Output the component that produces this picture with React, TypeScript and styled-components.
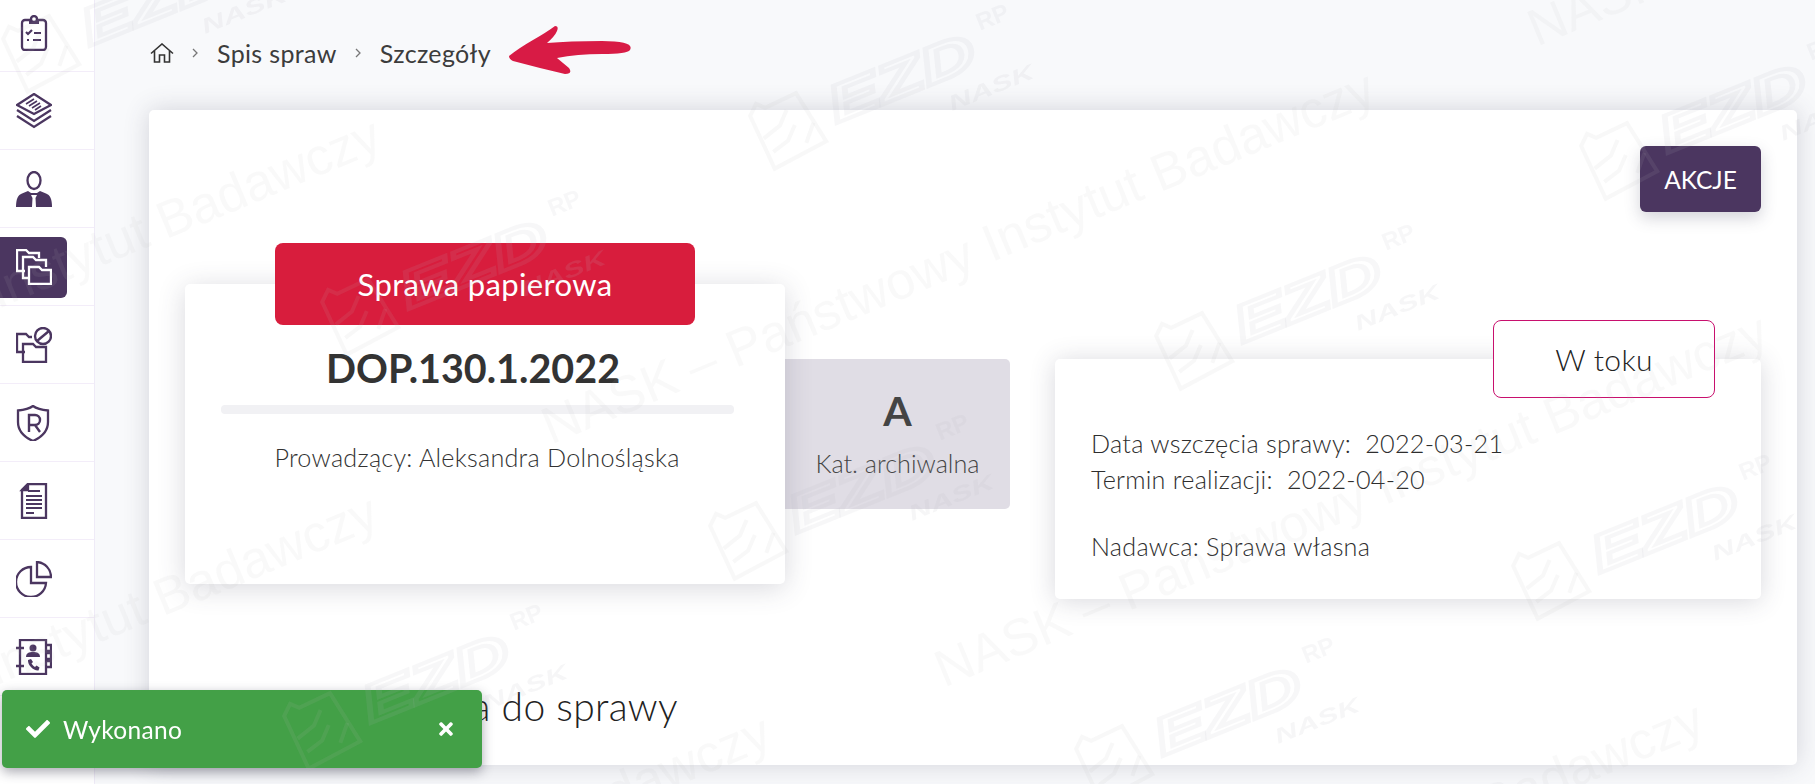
import React from 'react';
import styled, { createGlobalStyle } from 'styled-components';
import { FaCheck, FaTimes } from 'react-icons/fa';

const purple = '#4b3660';

const GlobalStyle = createGlobalStyle`
  html, body {
    margin: 0;
    padding: 0;
    height: 100%;
    overflow: hidden;
    background: #f8f9fb;
    font-family: 'Lato', 'Noto Sans', sans-serif;
    color: #3a3a3a;
  }
`;

const Page = styled.div`
  display: flex;
  width: 1815px;
  height: 784px;
  overflow: hidden;
`;

const Sidebar = styled.nav`
  flex: 0 0 95px;
  height: 784px;
  box-sizing: border-box;
  background: #fff;
  border-right: 1px solid #efebf7;
  display: flex;
  flex-direction: column;
  overflow: hidden;
`;

const NavRow = styled.div<{ $first?: boolean }>`
  flex: 0 0 ${p => (p.$first ? '72px' : '78px')};
  box-sizing: border-box;
  border-bottom: 1px solid #f3edf9;
  display: flex;
  align-items: center;
  padding: ${p => (p.$first ? '0 0 6px' : '1px 0 0')};
`;

const NavItem = styled.div<{ $active?: boolean }>`
  width: 67px;
  height: 61px;
  display: flex;
  align-items: center;
  justify-content: center;
  border-radius: 0 6px 6px 0;
  color: ${p => (p.$active ? '#fff' : purple)};
  background: ${p => (p.$active ? purple : 'transparent')};
`;

const Main = styled.main`
  flex: 1;
  min-width: 0;
  display: flex;
  flex-direction: column;
  padding: 0 18px 0 54px;
`;

const Breadcrumbs = styled.div`
  flex: 0 0 110px;
  box-sizing: border-box;
  display: flex;
  align-items: center;
  padding: 0 0 4px 1px;
  font-size: 25px;
  color: #3c3c3c;
`;

const Crumb = styled.span`
  line-height: 30px;
  letter-spacing: 0.35px;
`;

const Chevron = styled.svg`
  margin: 0 18px;
  flex: none;
`;

const Arrow = styled.svg`
  margin: -4px 0 0 18px;
  flex: none;
`;

const Card = styled.section`
  height: 655px;
  box-sizing: border-box;
  padding: 36px 36px 0;
  background: #fff;
  border-radius: 5px;
  box-shadow: 0 0 26px rgba(60, 60, 85, 0.2);
  display: flex;
  flex-direction: column;
`;

const ActionButton = styled.button`
  align-self: flex-end;
  width: 121px;
  height: 66px;
  border: 0;
  border-radius: 6px;
  background: ${purple};
  color: #fff;
  font: 400 24.5px 'Lato', sans-serif;
  box-shadow: 0 6px 16px rgba(60, 60, 85, 0.22);
`;

const Summary = styled.div`
  display: flex;
  align-items: flex-start;
  margin-top: 72px;
`;

const CaseCard = styled.div`
  position: relative;
  z-index: 2;
  flex: 0 0 600px;
  height: 300px;
  display: flex;
  flex-direction: column;
  align-items: center;
  background: #fff;
  border-radius: 5px;
  box-shadow: 0 4px 28px rgba(60, 60, 85, 0.2);
`;

const TypeTag = styled.div`
  width: 420px;
  height: 82px;
  margin-top: -41px;
  display: flex;
  align-items: center;
  justify-content: center;
  border-radius: 8px;
  background: #d81d3d;
  color: #fff;
  font-size: 31px;
  letter-spacing: 0.35px;
`;

const CaseNumber = styled.div`
  margin: 21px 24px 0 0;
  font-size: 39.5px;
  font-weight: 700;
  line-height: 44px;
  color: #333;
`;

const Divider = styled.div`
  width: 513px;
  height: 9px;
  margin: 15px 15px 0 0;
  border-radius: 4px;
  background: #f1f1f4;
`;

const Lead = styled.div`
  margin: 28px 16px 0 0;
  font-size: 25.2px;
  font-weight: 300;
  line-height: 30px;
  letter-spacing: 0.25px;
  color: #333;
`;

const Archive = styled.div`
  flex: 0 0 225px;
  height: 150px;
  margin-top: 75px;
  display: flex;
  flex-direction: column;
  align-items: center;
  border-radius: 0 5px 5px 0;
  background: #e0dde5;
`;

const ArchiveLetter = styled.div`
  margin-top: 30px;
  font-size: 41px;
  font-weight: 700;
  line-height: 44px;
  color: #444;
`;

const ArchiveLabel = styled.div`
  margin-top: 16px;
  font-size: 25.2px;
  font-weight: 300;
  line-height: 28px;
  color: #444;
`;

const DetailsCard = styled.div`
  flex: 1;
  height: 240px;
  margin: 75px 0 0 45px;
  box-sizing: border-box;
  padding: 0 46px 0 36px;
  display: flex;
  flex-direction: column;
  background: #fff;
  border-radius: 5px;
  box-shadow: 0 2px 26px rgba(60, 60, 85, 0.2);
`;

const StatusBadge = styled.div`
  align-self: flex-end;
  width: 222px;
  height: 78px;
  margin-top: -39px;
  box-sizing: border-box;
  display: flex;
  align-items: center;
  justify-content: center;
  border: 1px solid #c8106e;
  border-radius: 8px;
  background: #fff;
  font-size: 30px;
  font-weight: 300;
  letter-spacing: 0.3px;
  color: #222;
`;

const DetailLine = styled.div<{ $gap?: number }>`
  margin-top: ${p => p.$gap ?? 0}px;
  font-size: 25.2px;
  font-weight: 300;
  line-height: 36px;
  letter-spacing: 0.25px;
  white-space: pre;
  color: #2e2e2e;
`;

const SectionTitle = styled.h2`
  margin: 85px 0 0 33px;
  font-size: 39px;
  font-weight: 300;
  line-height: 44px;
  letter-spacing: 0.3px;
  color: #222;
`;

const Toast = styled.div`
  position: fixed;
  left: 2px;
  top: 690px;
  z-index: 5;
  width: 480px;
  height: 78px;
  box-sizing: border-box;
  padding: 0 26px 0 24px;
  display: flex;
  align-items: center;
  border-radius: 5px;
  background: #43a047;
  color: #fff;
  font-size: 24.5px;
  box-shadow: 0 4px 12px rgba(40, 40, 60, 0.4);
`;

const ToastText = styled.span`
  flex: 1;
  margin-left: 13px;
  letter-spacing: 0.3px;
`;

const Watermarks = styled.div`
  position: fixed;
  inset: 0;
  z-index: 10;
  overflow: hidden;
  pointer-events: none;
  filter: blur(0.6px);
`;

const MarkText = styled.div<{ $x: number; $y: number }>`
  position: absolute;
  left: ${p => p.$x}px;
  top: ${p => p.$y - 30}px;
  line-height: 60px;
  font-family: 'Liberation Sans', sans-serif;
  font-size: 52px;
  white-space: nowrap;
  color: rgba(185, 185, 190, 0.09);
  transform-origin: 0 50%;
  transform: rotate(-22.5deg);
`;

const MarkLogo = styled.svg<{ $x: number; $y: number }>`
  position: absolute;
  left: ${p => p.$x - 50}px;
  top: ${p => p.$y - 120}px;
  transform-origin: 50px 120px;
  transform: rotate(-22deg);
`;

const icon = { width: 36, height: 36, viewBox: '0 0 36 36', fill: 'none', stroke: 'currentColor', strokeWidth: 2.3 };

const ClipboardIcon = () => (
  <svg {...icon}>
    <rect x="6" y="5" width="24" height="30" rx="3" />
    <path d="M13 6h3a2.5 2.5 0 0 1 5 0h2v3H13z" fill="currentColor" stroke="none" />
    <circle cx="18" cy="4" r="3" fill="#fff" />
    <path d="M10 17l2 2 4-4M18 18h7M11 25h2M17 25h8" strokeWidth="2.2" />
  </svg>
);

const LayersIcon = () => (
  <svg {...icon}>
    <path d="M18 1L35 12 18 21 1 12z" />
    <path d="M10 11l8-5M13 13l8-5M16 15l8-5M19 17l6-4" strokeWidth="1.6" />
    <path d="M1 17l17 11 17-11M1 23l17 11 17-11" />
  </svg>
);

const PersonIcon = () => (
  <svg {...icon}>
    <ellipse cx="18" cy="9.5" rx="6.5" ry="8.5" />
    <path
      d="M0 36c0-8 2-12 6-13.500L12 20l3 2h6l3-2 6 2.500c4 1.500 6 5.500 6 13.500H20l-.5-9 1.500-3h-6l1.500 3-.5 9z"
      fill="currentColor"
      stroke="none"
    />
  </svg>
);

const FoldersIcon = () => (
  <svg {...icon}>
    <path d="M9 22H1V1h9l3 3h10v5" />
    <path d="M15 29H7V8h10l3 3h10v7" />
    <path d="M13 35V18h10l3 3h9v14z" fill={purple} />
  </svg>
);

const BlockedFolderIcon = () => (
  <svg {...icon}>
    <path d="M9 25H1V7h9l3 3h3" />
    <path d="M7 35V17h10l3 3h10v15z" />
    <circle cx="27" cy="9" r="8" fill="#fff" strokeWidth="2.4" />
    <path d="M21 14l12-10" strokeWidth="2.4" />
  </svg>
);

const ShieldIcon = () => (
  <svg {...icon}>
    <path d="M16 1c4 3 9 4 15 4.500V17c0 9-6 15-15 19C7 32 1 26 1 17V5.500C7 5 12 4 16 1z" transform="translate(1 0)" />
    <path d="M13 27V10h6a4.500 4.500 0 0 1 0 10h-6M19 20l5 7" strokeWidth="2.4" />
  </svg>
);

const DocumentIcon = () => (
  <svg {...icon}>
    <path d="M12 1h18v34H6V7z" />
    <path d="M6 7h6V1z" fill="currentColor" />
    <path d="M12 8h12M10 13h16M10 17h16M10 21h16M10 25h16M10 30h8" strokeWidth="2" />
  </svg>
);

const PieIcon = () => (
  <svg {...icon}>
    <path d="M15 6a15 15 0 1 0 15 16H15z" />
    <path d="M21 1a15 15 0 0 1 14 15H21z" />
  </svg>
);

const ContactsIcon = () => (
  <svg {...icon}>
    <rect x="4" y="1" width="26" height="34" />
    <path d="M30 6h5v6h-5M30 14h5v6h-5M30 22h5v6h-5M0 9h8M0 27h8" />
    <circle cx="17" cy="9" r="3.500" fill="currentColor" stroke="none" />
    <path d="M10 18c0-4 3-5 7-5s7 1 7 5z" fill="currentColor" stroke="none" />
    <path
      d="M12 21l3-1 2 3-1.500 1.500c1 1.500 2 2.500 3.500 3.500l1.500-1.500 3 2-1 3c-5 .5-11-5.500-10.500-10.500z"
      fill="currentColor"
      stroke="none"
    />
  </svg>
);

const navIcons = [
  ClipboardIcon,
  LayersIcon,
  PersonIcon,
  FoldersIcon,
  BlockedFolderIcon,
  ShieldIcon,
  DocumentIcon,
  PieIcon,
  ContactsIcon,
];

const logoSpots = [
  [40, 50],
  [787, 127],
  [1618, 157],
  [359, 313],
  [1193, 347],
  [747, 537],
  [1550, 577],
  [321, 727],
  [1113, 760],
];

const textSpots = [
  [-450, 475],
  [544, 428],
  [937, 671],
  [-453, 852],
  [-60, 1072],
  [873, 1059],
  [1530, 30],
];

const markGray = 'rgb(185,185,190)';

// folder with circuit lines plus the EZD RP / NASK wordmark, all very faint
const Logo = ({ x, y }: { x: number; y: number }) => (
  <MarkLogo $x={x} $y={y} width="320" height="200" viewBox="0 0 320 200">
    <g fill="none" stroke={markGray} strokeOpacity="0.1" strokeWidth="4">
      <path d="M20 96l10-9 7 7 34-2 10 56-58 6z" />
      <path d="M24 122l20-6 12-12M28 138l18-5 12-12M62 142l14-16" />
    </g>
    <text
      x="97"
      y="135"
      fontFamily="Liberation Sans, sans-serif"
      fontSize="52"
      fontWeight="700"
      fontStyle="italic"
      textLength="155"
      lengthAdjust="spacingAndGlyphs"
      fill="none"
      stroke={markGray}
      strokeOpacity="0.11"
      strokeWidth="4"
    >
      EZD
    </text>
    <text
      x="265"
      y="103"
      fontFamily="Liberation Sans, sans-serif"
      fontSize="24"
      fontWeight="700"
      fill={markGray}
      fillOpacity="0.11"
    >
      RP
    </text>
    <text
      x="209"
      y="167"
      fontFamily="Liberation Sans, sans-serif"
      fontSize="21"
      fontWeight="700"
      fontStyle="italic"
      textLength="90"
      lengthAdjust="spacingAndGlyphs"
      fill={markGray}
      fillOpacity="0.13"
    >
      NASK
    </text>
  </MarkLogo>
);

const App = () => (
  <>
    <GlobalStyle />
    <Page>
      <Sidebar>
        {navIcons.map((NavIcon, i) => (
          <NavRow key={i} $first={i === 0}>
            <NavItem $active={i === 3}>
              <NavIcon />
            </NavItem>
          </NavRow>
        ))}
      </Sidebar>
      <Main>
        <Breadcrumbs>
          <svg width="24" height="20" viewBox="0 0 24 20" fill="none" stroke="#333" strokeWidth="1.6">
            <path d="M1 10.500L12 1l11 9.500M4.500 8v11h5v-7h5v7h5V8" />
          </svg>
          <Chevron width="7" height="10" viewBox="0 0 7 10" fill="none" stroke="#777" strokeWidth="1.3">
            <path d="M1 1l4 4-4 4" />
          </Chevron>
          <Crumb>Spis spraw</Crumb>
          <Chevron width="7" height="10" viewBox="0 0 7 10" fill="none" stroke="#777" strokeWidth="1.3">
            <path d="M1 1l4 4-4 4" />
          </Chevron>
          <Crumb>Szczegóły</Crumb>
          <Arrow width="122" height="50" viewBox="0 0 122 50">
            <path
              d="M0 30Q10 22 24 14T46 0Q50 0 48 5T38 17Q60 15 93 15T121 24Q118 28 93 28T48 32L60 42Q64 48 56 48Q30 42 4 35Q0 33 0 30z"
              fill="#d81b45"
            />
          </Arrow>
        </Breadcrumbs>
        <Card>
          <ActionButton>AKCJE</ActionButton>
          <Summary>
            <CaseCard>
              <TypeTag>Sprawa papierowa</TypeTag>
              <CaseNumber>DOP.130.1.2022</CaseNumber>
              <Divider />
              <Lead>Prowadzący: Aleksandra Dolnośląska</Lead>
            </CaseCard>
            <Archive>
              <ArchiveLetter>A</ArchiveLetter>
              <ArchiveLabel>Kat. archiwalna</ArchiveLabel>
            </Archive>
            <DetailsCard>
              <StatusBadge>W toku</StatusBadge>
              <DetailLine $gap={27}>Data wszczęcia sprawy:  2022-03-21</DetailLine>
              <DetailLine>Termin realizacji:  2022-04-20</DetailLine>
              <DetailLine $gap={31}>Nadawca: Sprawa własna</DetailLine>
            </DetailsCard>
          </Summary>
          <SectionTitle>Korespondencja do sprawy</SectionTitle>
        </Card>
      </Main>
    </Page>
    <Toast>
      <FaCheck size={24} />
      <ToastText>Wykonano</ToastText>
      <FaTimes size={20} />
    </Toast>
    <Watermarks>
      {textSpots.map(([x, y]) => (
        <MarkText key={`${x}-${y}`} $x={x} $y={y}>
          NASK – Państwowy Instytut Badawczy
        </MarkText>
      ))}
      {logoSpots.map(([x, y]) => (
        <Logo key={`${x}-${y}`} x={x} y={y} />
      ))}
    </Watermarks>
  </>
);

export default App;
